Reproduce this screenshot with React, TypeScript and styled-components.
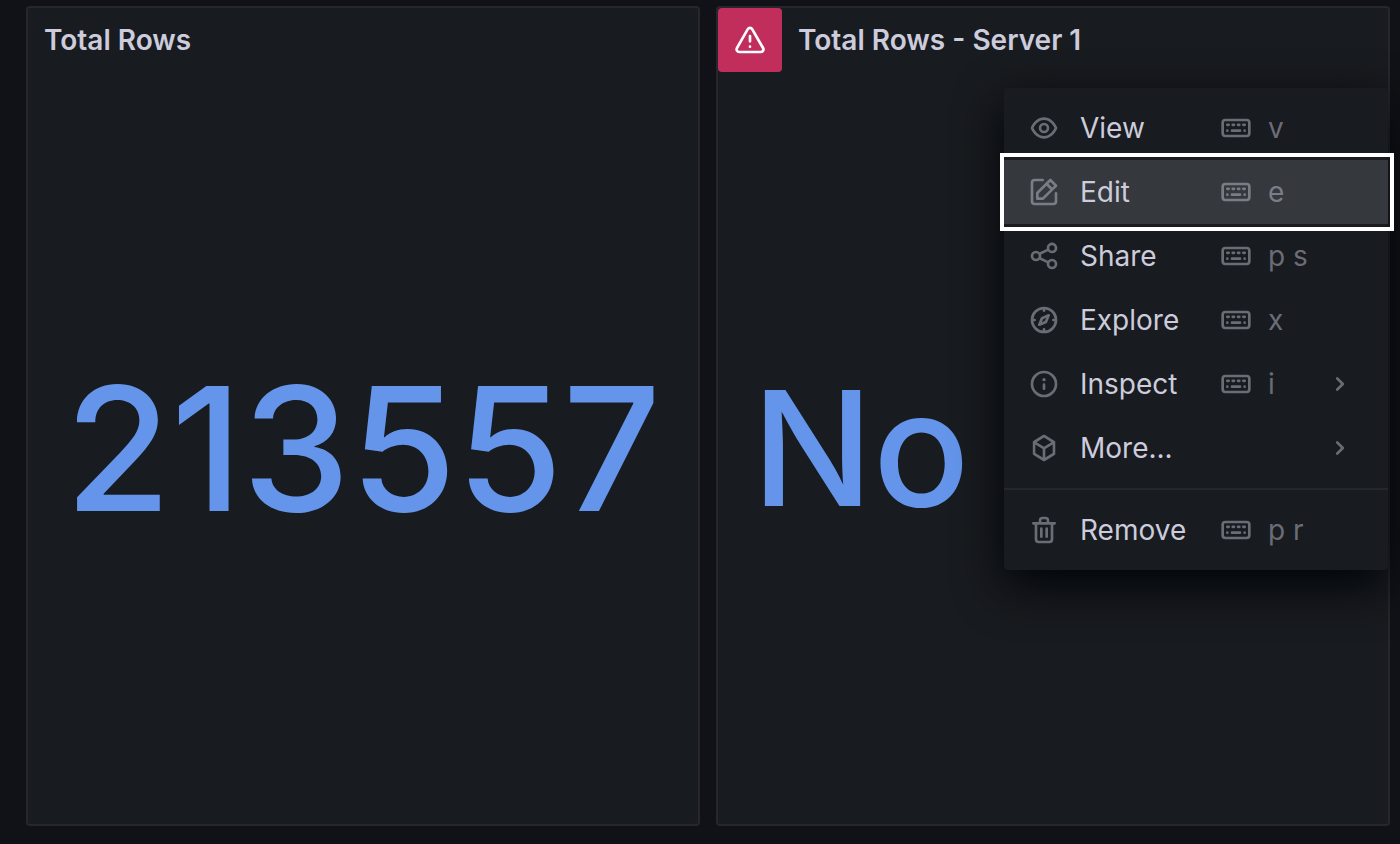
import React from "react";
import styled, { createGlobalStyle, css } from "styled-components";

const GlobalStyle = createGlobalStyle`
  *, *::before, *::after { box-sizing: border-box; }
  body {
    margin: 0;
    background: #111217;
    color: #ccccdc;
    font-family: Inter, "Liberation Sans", sans-serif;
    font-size: 28px;
    line-height: 44px;
  }
`;

const Dashboard = styled.main`
  display: grid;
  grid-template-columns: repeat(2, minmax(0, 1fr));
  gap: 16px;
  min-height: 100vh;
  padding: 6px 10px 18px 26px;
  overflow: hidden;
`;

const Panel = styled.section`
  position: relative;
  display: flex;
  flex-direction: column;
  border: 2px solid #25272c;
  border-radius: 4px;
  background: #181b1f;
`;

const PanelHeader = styled.header`
  display: flex;
  align-items: center;
  height: 64px;
`;

const PanelTitle = styled.h2`
  margin: 0;
  padding: 0 16px;
  font-size: 28px;
  font-weight: 600;
`;

const AlertButton = styled.button`
  display: flex;
  align-items: center;
  justify-content: center;
  width: 64px;
  height: 64px;
  padding: 0;
  border: 0;
  border-radius: 4px;
  background: #c22e5c;
  color: #fff;
`;

const PanelBody = styled.div<{ $align?: string }>`
  display: flex;
  flex: 1;
  align-items: center;
  justify-content: ${(p) => p.$align ?? "center"};
  padding: 0 34px;
`;

const Stat = styled.span<{ $size: number }>`
  color: #6495eb;
  font-size: ${(p) => p.$size}px;
  font-weight: 500;
  line-height: 208px;
`;

const Menu = styled.div`
  position: absolute;
  top: 80px;
  right: 0;
  width: 384px;
  padding: 8px 0;
  border-radius: 4px;
  background: #181b1f;
  box-shadow: 0 16px 48px #010409;
`;

const Item = styled.button<{ $active?: boolean }>`
  --muted: #6b6d76;
  position: relative;
  display: grid;
  grid-template-columns: 32px 160px 32px 1fr 32px;
  align-items: center;
  width: 100%;
  height: 64px;
  padding: 0 32px 0 24px;
  border: 0;
  background: transparent;
  color: inherit;
  font: inherit;
  text-align: left;
  ${(p) =>
    p.$active &&
    css`
      --muted: #7b7d86;
      z-index: 1;
      background: #35383c;
      &::after {
        content: "";
        position: absolute;
        inset: -7px -6px -7px -4px;
        border: 4px solid #fff;
      }
    `}
`;

const Label = styled.span`
  padding-left: 20px;
`;

const Shortcut = styled.kbd`
  padding-left: 16px;
  color: var(--muted);
  font: inherit;
`;

const Divider = styled.hr`
  height: 2px;
  margin: 8px 0;
  border: 0;
  background: #25272c;
`;

const Glyph = styled.svg<{ $muted?: boolean }>`
  display: block;
  width: 32px;
  height: 32px;
  fill: ${(p) => (p.$muted ? "var(--muted)" : "currentColor")};
`;

const paths = {
  warning:
    "M12,16a1,1,0,1,0,1,1A1,1,0,0,0,12,16Zm10.67,1.47-8.05-14a3,3,0,0,0-5.24,0l-8,14A3,3,0,0,0,3.94,22H20.06a3,3,0,0,0,2.61-4.53Zm-1.73,2a1,1,0,0,1-.88.51H3.94a1,1,0,0,1-.88-.51,1,1,0,0,1,0-1l8-14a1,1,0,0,1,1.78,0l8.05,14A1,1,0,0,1,20.94,19.49ZM12,8a1,1,0,0,0-1,1v4a1,1,0,0,0,2,0V9A1,1,0,0,0,12,8Z",
  eye: "M21.92,11.6C19.9,6.91,16.1,4,12,4S4.1,6.91,2.08,11.6a1,1,0,0,0,0,.8C4.1,17.09,7.9,20,12,20s7.9-2.91,9.92-7.6A1,1,0,0,0,21.92,11.6ZM12,18c-3.17,0-6.17-2.29-7.9-6C5.83,8.29,8.83,6,12,6s6.17,2.29,7.9,6C18.17,15.71,15.17,18,12,18ZM12,8a4,4,0,1,0,4,4A4,4,0,0,0,12,8Zm0,6a2,2,0,1,1,2-2A2,2,0,0,1,12,14Z",
  edit: "M21,12a1,1,0,0,0-1,1v6a1,1,0,0,1-1,1H5a1,1,0,0,1-1-1V5A1,1,0,0,1,5,4h6a1,1,0,0,0,0-2H5A3,3,0,0,0,2,5V19a3,3,0,0,0,3,3H19a3,3,0,0,0,3-3V13A1,1,0,0,0,21,12ZM6,12.76V17a1,1,0,0,0,1,1h4.24a1,1,0,0,0,.71-.29l6.92-6.93h0L21.71,8a1,1,0,0,0,0-1.42L17.47,2.29a1,1,0,0,0-1.42,0L13.23,5.12h0L6.29,12.05A1,1,0,0,0,6,12.76ZM16.76,4.41l2.83,2.83L18.17,8.66,15.34,5.83ZM8,13.17l5.93-5.93,2.83,2.83L10.83,16H8Z",
  share:
    "M18,14a4,4,0,0,0-3.08,1.48l-5.1-2.35a3.64,3.64,0,0,0,0-2.26l5.1-2.35A4,4,0,1,0,14,6a4.17,4.17,0,0,0,.07.71L8.79,9.14a4,4,0,1,0,0,5.72l5.28,2.43A4.17,4.17,0,0,0,14,18a4,4,0,1,0,4-4ZM18,4a2,2,0,1,1-2,2A2,2,0,0,1,18,4ZM6,14a2,2,0,1,1,2-2A2,2,0,0,1,6,14Zm12,6a2,2,0,1,1,2-2A2,2,0,0,1,18,20Z",
  compass:
    "M12,2A10,10,0,1,0,22,12,10,10,0,0,0,12,2Zm1,17.93V19a1,1,0,0,0-2,0v.93A8,8,0,0,1,4.07,13H5a1,1,0,0,0,0-2H4.07A8,8,0,0,1,11,4.07V5a1,1,0,0,0,2,0V4.07A8,8,0,0,1,19.93,11H19a1,1,0,0,0,0,2h.93A8,8,0,0,1,13,19.93ZM15.14,7.55l-5,2.12a1,1,0,0,0-.52.52l-2.12,5a1,1,0,0,0,.21,1.1,1,1,0,0,0,.7.3.93.93,0,0,0,.4-.09l5-2.12a1,1,0,0,0,.52-.52l2.12-5a1,1,0,0,0-1.31-1.31Zm-2.49,5.1-2.28,1,1-2.28,2.28-1Z",
  info: "M12,2A10,10,0,1,0,22,12,10,10,0,0,0,12,2Zm0,18a8,8,0,1,1,8-8A8,8,0,0,1,12,20Zm0-8.5a1,1,0,0,0-1,1v3a1,1,0,0,0,2,0v-3A1,1,0,0,0,12,11.5Zm0-4a1.25,1.25,0,1,0,1.25,1.25A1.25,1.25,0,0,0,12,7.5Z",
  cube: "M20.47,7.37s0,0,0-.08l-.06-.15a.71.71,0,0,0-.07-.09.94.94,0,0,0-.09-.12l-.09-.07L20,6.78l-7.5-4.63a1,1,0,0,0-1.06,0L4,6.78l-.09.08-.09.07a.94.94,0,0,0-.09.12.71.71,0,0,0-.07.09l-.06.15s0,0,0,.08a1.15,1.15,0,0,0,0,.26v8.74a1,1,0,0,0,.47.85l7.5,4.63h0a.47.47,0,0,0,.15.06s.05,0,.08,0a.86.86,0,0,0,.52,0l.08,0a.47.47,0,0,0,.15-.06h0L20,17.22a1,1,0,0,0,.47-.85V7.63A1.15,1.15,0,0,0,20.47,7.37ZM11,19.21l-5.5-3.4V9.43l5.5,3.39Zm1-8.12L6.4,7.63,12,4.18l5.6,3.45Zm6.5,4.72L13,19.21V12.82l5.5-3.39Z",
  trash:
    "M10,18a1,1,0,0,0,1-1V11a1,1,0,0,0-2,0v6A1,1,0,0,0,10,18ZM20,6H16V5a3,3,0,0,0-3-3H11A3,3,0,0,0,8,5V6H4A1,1,0,0,0,4,8H5V19a3,3,0,0,0,3,3h8a3,3,0,0,0,3-3V8h1a1,1,0,0,0,0-2ZM10,5a1,1,0,0,1,1-1h2a1,1,0,0,1,1,1V6H10Zm7,14a1,1,0,0,1-1,1H8a1,1,0,0,1-1-1V8H17Zm-3-1a1,1,0,0,0,1-1V11a1,1,0,0,0-2,0v6A1,1,0,0,0,14,18Z",
  angleRight:
    "M14.83,11.29,10.59,7.05a1,1,0,0,0-1.42,0,1,1,0,0,0,0,1.41L12.71,12,9.17,15.54a1,1,0,0,0,0,1.41,1,1,0,0,0,.71.29,1,1,0,0,0,.71-.29l4.24-4.24A1,1,0,0,0,14.83,11.29Z",
  keyboard:
    "M4,5A3,3,0,0,0,1,8V16a3,3,0,0,0,3,3H20a3,3,0,0,0,3-3V8a3,3,0,0,0-3-3ZM4,7H20a1,1,0,0,1,1,1V16a1,1,0,0,1-1,1H4a1,1,0,0,1-1-1V8A1,1,0,0,1,4,7ZM5.5,8.6h1a1,1,0,0,1,0,2h-1a1,1,0,0,1,0-2ZM9.5,8.6h1a1,1,0,0,1,0,2h-1a1,1,0,0,1,0-2ZM13.5,8.6h1a1,1,0,0,1,0,2h-1a1,1,0,0,1,0-2ZM17.5,8.6h1a1,1,0,0,1,0,2h-1a1,1,0,0,1,0-2ZM5.5,13a1,1,0,0,1,0,2a1,1,0,0,1,0-2ZM9,13H15a1,1,0,0,1,0,2H9a1,1,0,0,1,0-2ZM18.5,13a1,1,0,0,1,0,2a1,1,0,0,1,0-2Z",
};

type IconName = keyof typeof paths;

const Icon = ({ name, muted }: { name: IconName; muted?: boolean }) => (
  <Glyph viewBox="0 0 24 24" aria-hidden="true" $muted={muted}>
    <path fillRule={name === "keyboard" ? "evenodd" : "nonzero"} d={paths[name]} />
  </Glyph>
);

interface Entry {
  icon: IconName;
  label: string;
  keys?: string;
  submenu?: boolean;
  active?: boolean;
}

const entries: Entry[] = [
  { icon: "eye", label: "View", keys: "v" },
  { icon: "edit", label: "Edit", keys: "e", active: true },
  { icon: "share", label: "Share", keys: "p s" },
  { icon: "compass", label: "Explore", keys: "x" },
  { icon: "info", label: "Inspect", keys: "i", submenu: true },
  { icon: "cube", label: "More...", submenu: true },
];

const MenuEntry = ({ icon, label, keys, submenu, active }: Entry) => (
  <Item type="button" role="menuitem" $active={active} aria-haspopup={submenu ? "menu" : undefined}>
    <Icon name={icon} muted />
    <Label>{label}</Label>
    {keys ? <Icon name="keyboard" muted /> : <span />}
    {keys ? <Shortcut>{keys}</Shortcut> : <span />}
    {submenu && <Icon name="angleRight" muted />}
  </Item>
);

export default function App() {
  return (
    <>
      <GlobalStyle />
      <Dashboard>
        <Panel>
          <PanelHeader>
            <PanelTitle>Total Rows</PanelTitle>
          </PanelHeader>
          <PanelBody>
            <Stat $size={172}>213557</Stat>
          </PanelBody>
        </Panel>
        <Panel>
          <PanelHeader>
            <AlertButton type="button" aria-label="Panel error">
              <Icon name="warning" />
            </AlertButton>
            <PanelTitle>Total Rows - Server 1</PanelTitle>
          </PanelHeader>
          <PanelBody $align="flex-start">
            <Stat $size={160}>No</Stat>
          </PanelBody>
          <Menu role="menu">
            {entries.map((entry) => (
              <MenuEntry key={entry.label} {...entry} />
            ))}
            <Divider />
            <MenuEntry icon="trash" label="Remove" keys="p r" />
          </Menu>
        </Panel>
      </Dashboard>
    </>
  );
}
